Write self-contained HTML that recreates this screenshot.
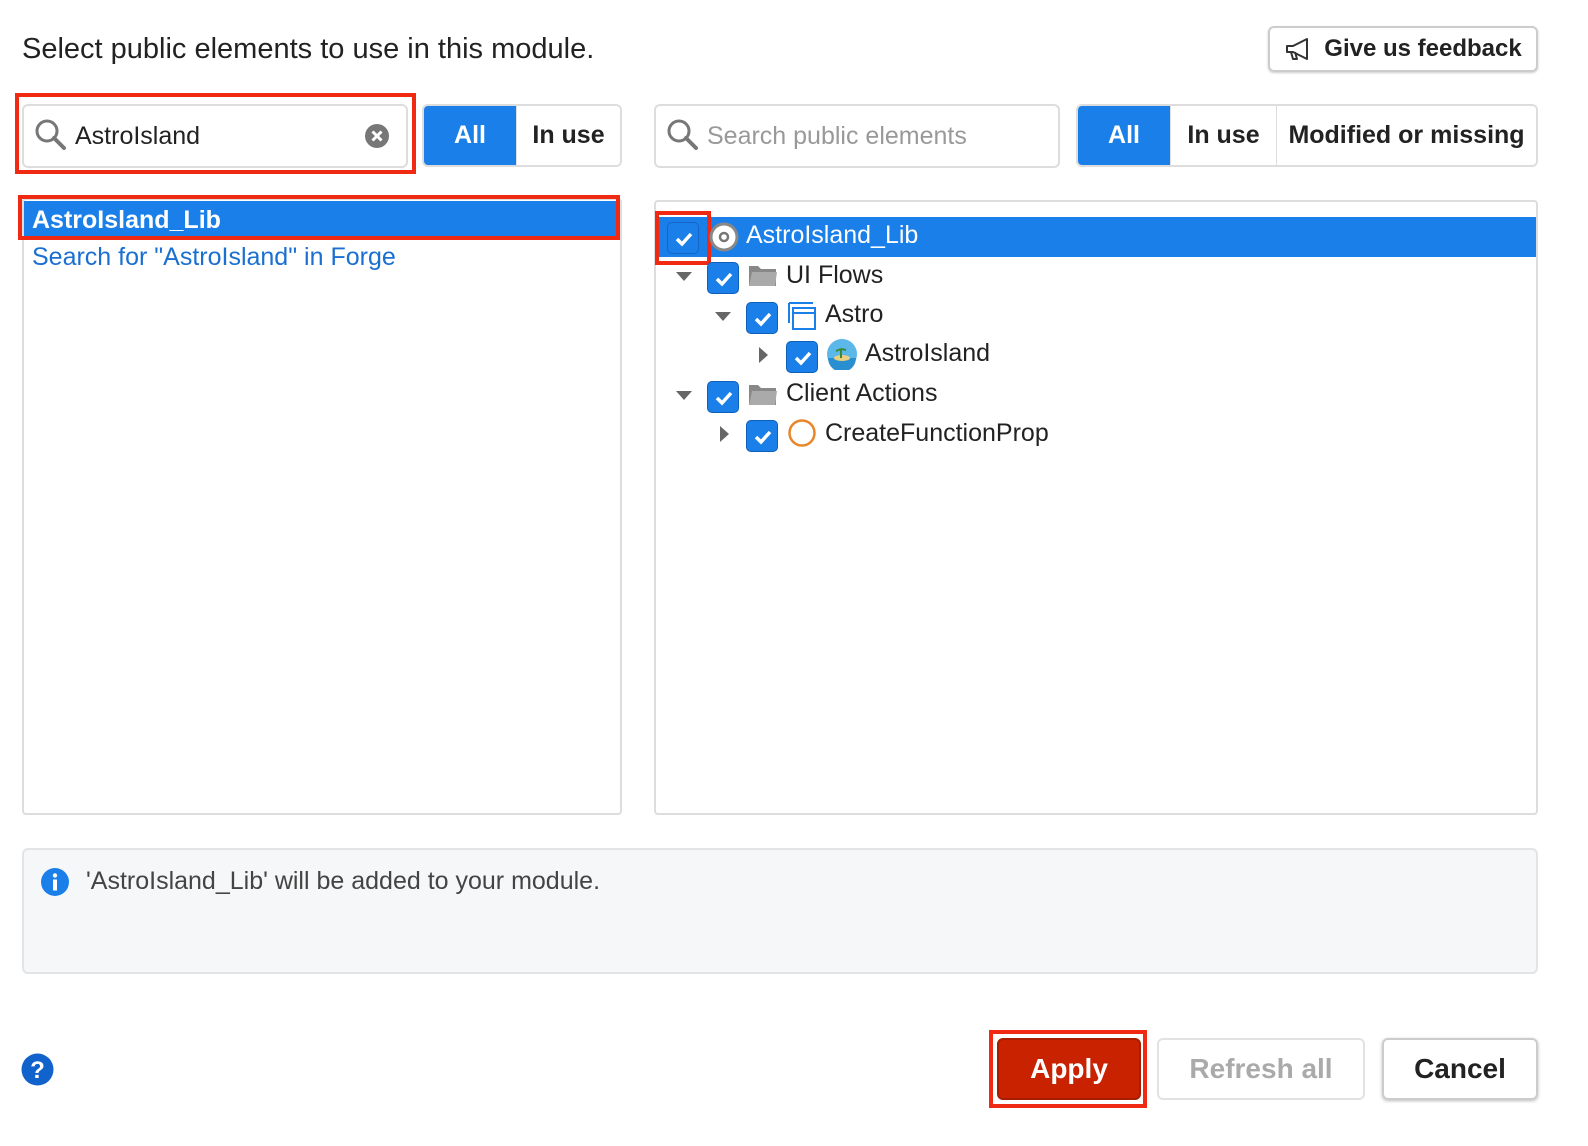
<!DOCTYPE html>
<html><head><meta charset="utf-8"><style>
*{box-sizing:border-box;margin:0;padding:0}
body{width:1588px;height:1146px;background:#fff;font-family:"Liberation Sans",sans-serif;color:#222;position:relative;overflow:hidden}
.a{position:absolute}
.box{position:absolute;border:2px solid #ddd;border-radius:6px;background:#fff}
.red{position:absolute;border:4px solid #f02a12}
.seg{position:absolute;display:flex;border:2px solid #ddd;border-radius:6px;overflow:hidden;height:63px;font-size:25px;font-weight:bold}
.seg div{display:flex;align-items:center;justify-content:center;border-left:1px solid #ddd;background:#fff}
.seg div.on{background:#1a7fe8;color:#fff;border:none}
.cb{position:absolute;width:32px;height:32px;background:#1a7fe8;border-radius:5px;border:1px solid #0e5fb8}
.cb svg{position:absolute;left:5px;top:6px}
.t{position:absolute;font-size:25px;white-space:nowrap}
.tri{position:absolute;width:0;height:0}
.dn{border-left:8px solid transparent;border-right:8px solid transparent;border-top:9px solid #666}
.rt{border-top:8px solid transparent;border-bottom:8px solid transparent;border-left:9px solid #666}
.btn{position:absolute;border:2px solid #ccc;border-radius:6px;display:flex;align-items:center;justify-content:center;font-size:28px;font-weight:bold;height:62px}
</style></head><body>
<div class="t" style="left:22px;top:33px;font-size:29px">Select public elements to use in this module.</div>
<div class="btn" style="left:1268px;top:26px;width:270px;height:46px;font-size:24px;color:#222;box-shadow:0 1px 2px #ccc">
<svg width="30" height="24" viewBox="0 0 30 24" style="margin-right:10px"><path d="M3 9h6l14-7v20L9 15H3z M7 15l2 7h4l-2-7" fill="none" stroke="#333" stroke-width="2" stroke-linejoin="round"/></svg>Give us feedback</div>

<div class="red" style="left:15px;top:93px;width:401px;height:81px"></div>
<div class="box" style="left:22px;top:104px;width:386px;height:64px"></div>
<svg class="a" style="left:34px;top:118px" width="34" height="34" viewBox="0 0 34 34"><circle cx="13" cy="13" r="10" fill="none" stroke="#777" stroke-width="3"/><path d="M20 20l10 10" stroke="#777" stroke-width="4" stroke-linecap="round"/></svg>
<div class="t" style="left:75px;top:122px">AstroIsland</div>
<svg class="a" style="left:364px;top:123px" width="26" height="26" viewBox="0 0 26 26"><circle cx="13" cy="13" r="12" fill="#777"/><path d="M8.5 8.5l9 9M17.5 8.5l-9 9" stroke="#fff" stroke-width="3"/></svg>
<div class="seg" style="left:422px;top:104px;width:200px"><div class="on" style="width:92px">All</div><div style="flex:1">In use</div></div>

<div class="box" style="left:22px;top:198px;width:600px;height:617px;border-radius:4px"></div>
<div class="a" style="left:24px;top:201px;width:594px;height:36px;background:#1a7fe8"></div>
<div class="red" style="left:18px;top:195px;width:602px;height:45px"></div>
<div class="t" style="left:32px;top:206px;color:#fff;font-weight:bold">AstroIsland_Lib</div>
<div class="t" style="left:32px;top:243px;color:#1a6fd0">Search for "AstroIsland" in Forge</div>

<div class="box" style="left:654px;top:104px;width:406px;height:64px"></div>
<svg class="a" style="left:666px;top:118px" width="34" height="34" viewBox="0 0 34 34"><circle cx="13" cy="13" r="10" fill="none" stroke="#777" stroke-width="3"/><path d="M20 20l10 10" stroke="#777" stroke-width="4" stroke-linecap="round"/></svg>
<div class="t" style="left:707px;top:122px;color:#999">Search public elements</div>
<div class="seg" style="left:1076px;top:104px;width:462px"><div class="on" style="width:92px">All</div><div style="width:106px">In use</div><div style="flex:1">Modified or missing</div></div>

<div class="box" style="left:654px;top:200px;width:884px;height:615px;border-radius:4px"></div>
<div class="a" style="left:656px;top:217px;width:880px;height:40px;background:#1a7fe8"></div>
<div class="cb" style="left:667px;top:222px;border-color:#1565c8"><svg width="22" height="20" viewBox="0 0 22 20"><path d="M4 10l5 5 9-10" fill="none" stroke="#fff" stroke-width="3.5"/></svg></div>
<div class="red" style="left:655px;top:211px;width:56px;height:54px"></div>
<svg class="a" style="left:709px;top:222px" width="30" height="30"><circle cx="15" cy="15" r="13" fill="#fff" stroke="#888" stroke-width="3"/><circle cx="15" cy="15" r="4" fill="none" stroke="#777" stroke-width="2.5"/></svg>
<div class="t" style="left:746px;top:221px;color:#fff">AstroIsland_Lib</div>

<div class="tri dn" style="left:676px;top:272px"></div>
<div class="cb" style="left:707px;top:262px"><svg width="22" height="20" viewBox="0 0 22 20"><path d="M4 10l5 5 9-10" fill="none" stroke="#fff" stroke-width="3.5"/></svg></div>
<svg class="a" style="left:748px;top:262px" width="30" height="26"><path d="M1 4h9l3 3h15v17H1z" fill="#888"/><path d="M4 10h25l-2 14H1z" fill="#aaa"/></svg>
<div class="t" style="left:786px;top:261px">UI Flows</div>

<div class="tri dn" style="left:715px;top:312px"></div>
<div class="cb" style="left:746px;top:302px"><svg width="22" height="20" viewBox="0 0 22 20"><path d="M4 10l5 5 9-10" fill="none" stroke="#fff" stroke-width="3.5"/></svg></div>
<svg class="a" style="left:787px;top:301px" width="30" height="30"><path d="M2 2h24M2 2v20" stroke="#1a7fe8" stroke-width="2" fill="none"/><rect x="6" y="7" width="22" height="21" fill="none" stroke="#1a7fe8" stroke-width="2"/><path d="M6 12h22" stroke="#1a7fe8" stroke-width="2"/></svg>
<div class="t" style="left:825px;top:300px">Astro</div>

<div class="tri rt" style="left:759px;top:347px"></div>
<div class="cb" style="left:786px;top:341px"><svg width="22" height="20" viewBox="0 0 22 20"><path d="M4 10l5 5 9-10" fill="none" stroke="#fff" stroke-width="3.5"/></svg></div>
<svg class="a" style="left:826px;top:338px" width="32" height="32"><circle cx="16" cy="16" r="15" fill="#5bb8e8"/><path d="M2 20h28a14 14 0 0 1-28 0z" fill="#2a8fd0"/><ellipse cx="16" cy="20" rx="8" ry="3" fill="#e8d080"/><path d="M15 20v-9M15 11l-5 2M15 11l5 1" stroke="#3a8a3a" stroke-width="2"/></svg>
<div class="t" style="left:865px;top:339px">AstroIsland</div>

<div class="tri dn" style="left:676px;top:391px"></div>
<div class="cb" style="left:707px;top:381px"><svg width="22" height="20" viewBox="0 0 22 20"><path d="M4 10l5 5 9-10" fill="none" stroke="#fff" stroke-width="3.5"/></svg></div>
<svg class="a" style="left:748px;top:381px" width="30" height="26"><path d="M1 4h9l3 3h15v17H1z" fill="#888"/><path d="M4 10h25l-2 14H1z" fill="#aaa"/></svg>
<div class="t" style="left:786px;top:379px">Client Actions</div>

<div class="tri rt" style="left:720px;top:426px"></div>
<div class="cb" style="left:746px;top:420px"><svg width="22" height="20" viewBox="0 0 22 20"><path d="M4 10l5 5 9-10" fill="none" stroke="#fff" stroke-width="3.5"/></svg></div>
<svg class="a" style="left:787px;top:418px" width="30" height="30"><circle cx="15" cy="15" r="12.5" fill="none" stroke="#e8862a" stroke-width="2.5"/></svg>
<div class="t" style="left:825px;top:419px">CreateFunctionProp</div>

<div class="a" style="left:22px;top:848px;width:1516px;height:126px;background:#f6f7f8;border:2px solid #e2e4e6;border-radius:6px"></div>
<svg class="a" style="left:40px;top:867px" width="30" height="30"><circle cx="15" cy="15" r="14" fill="#1a7fe8"/><circle cx="15" cy="8.5" r="2.2" fill="#fff"/><rect x="13" y="12.5" width="4" height="11" fill="#fff"/></svg>
<div class="t" style="left:86px;top:867px;color:#444">'AstroIsland_Lib' will be added to your module.</div>

<svg class="a" style="left:21px;top:1053px" width="33" height="33"><circle cx="16.5" cy="16.5" r="16" fill="#1262cc"/><text x="16.5" y="25" font-family="Liberation Sans" font-weight="bold" font-size="24" fill="#fff" text-anchor="middle">?</text></svg>

<div class="red" style="left:989px;top:1030px;width:158px;height:78px"></div>
<div class="btn" style="left:997px;top:1038px;width:144px;background:#c82200;border-color:#a81c00;color:#fff">Apply</div>
<div class="btn" style="left:1157px;top:1038px;width:208px;color:#aaa;border-color:#e2e2e2">Refresh all</div>
<div class="btn" style="left:1382px;top:1038px;width:156px;color:#222;box-shadow:0 1px 3px #bbb">Cancel</div>
</body></html>
